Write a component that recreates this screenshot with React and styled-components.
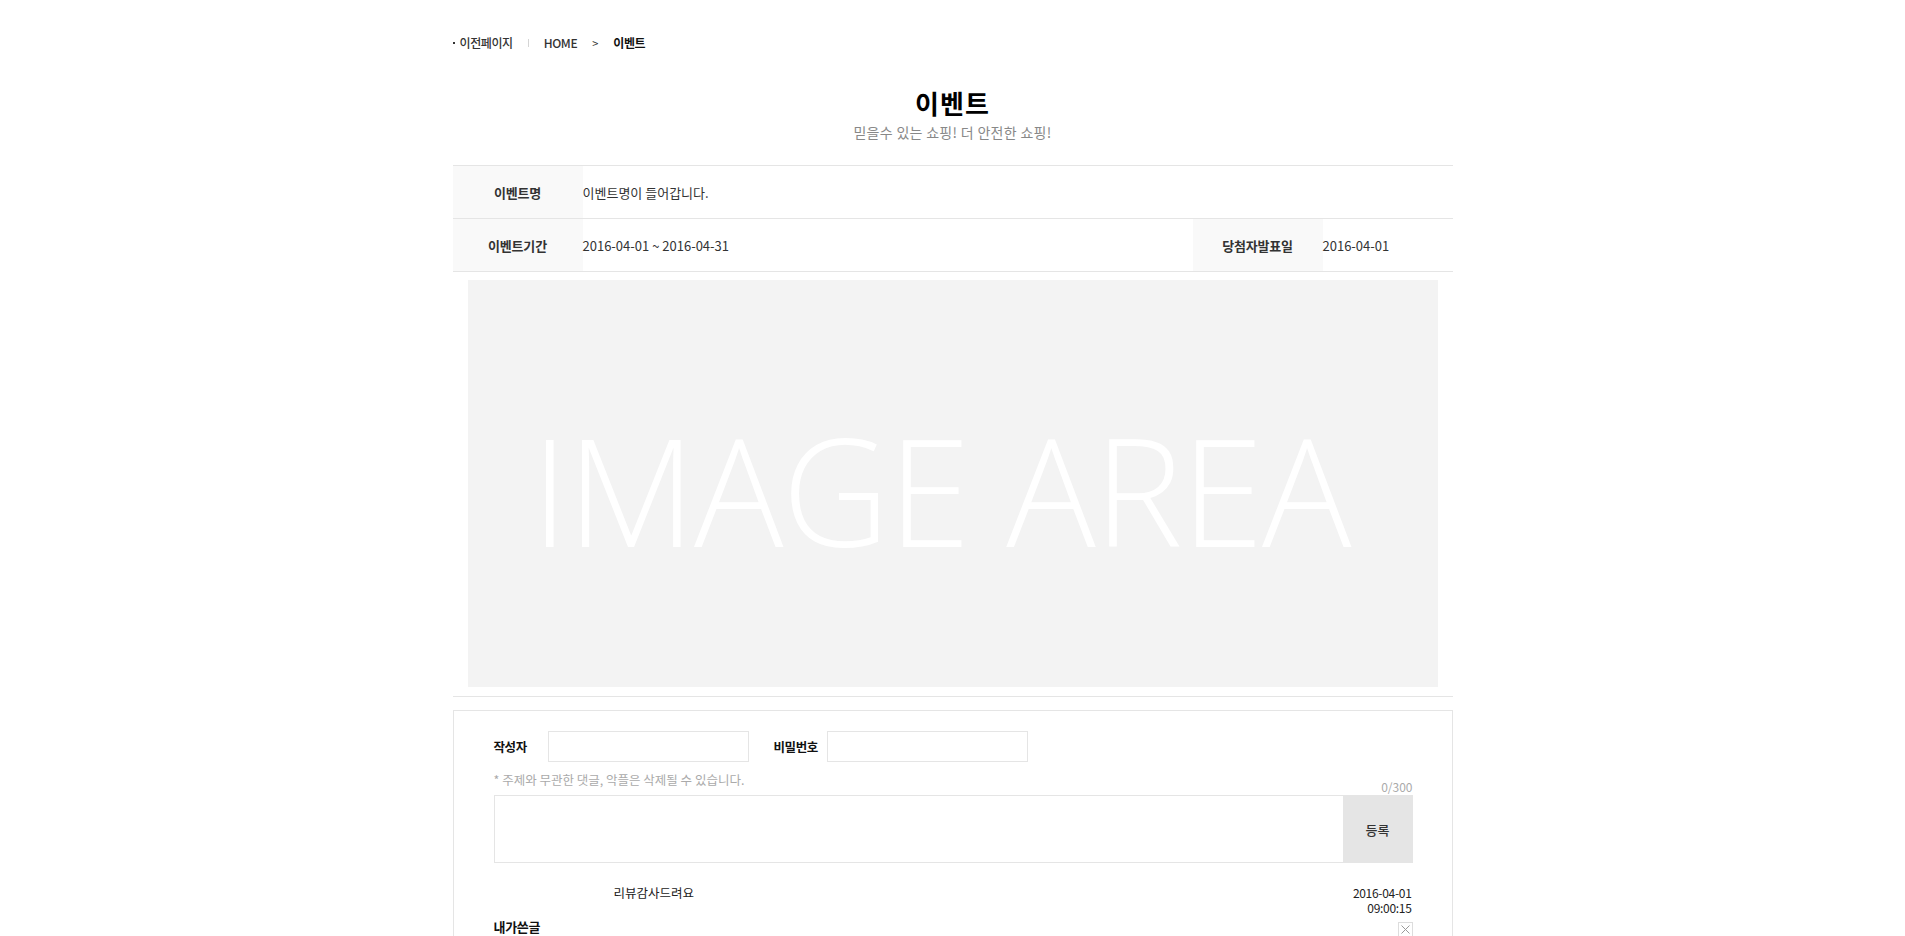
import React from "react";
import styled, { createGlobalStyle } from "styled-components";

const GlobalStyle = createGlobalStyle`
  html, body {
    margin: 0;
    padding: 0;
    overflow: hidden;
    background: #fff;
  }
  body {
    font-family: "Noto Sans CJK KR", "Noto Sans", sans-serif;
    color: #333;
  }
  * { box-sizing: border-box; }
`;

const EventView = () => {
  return (
    <Wrap>
      <Breadcrumb>
        <Crumb>
          <Dot />
          이전페이지
        </Crumb>
        <Bar />
        <Crumb>HOME</Crumb>
        <Arrow>&gt;</Arrow>
        <Crumb $current>이벤트</Crumb>
      </Breadcrumb>

      <TitleBox>
        <Title>이벤트</Title>
        <SubTitle>믿을수 있는 쇼핑! 더 안전한 쇼핑!</SubTitle>
      </TitleBox>

      <InfoTable>
        <InfoRow>
          <Label>이벤트명</Label>
          <Value $span>이벤트명이 들어갑니다.</Value>
        </InfoRow>
        <InfoRow>
          <Label>이벤트기간</Label>
          <Value>2016-04-01 ~ 2016-04-31</Value>
          <Label>당첨자발표일</Label>
          <Value>2016-04-01</Value>
        </InfoRow>
      </InfoTable>

      <ImageWrap>
        <ImageArea>IMAGE AREA</ImageArea>
      </ImageWrap>

      <CommentBox>
        <FormRow>
          <FieldLabel $width="54px">작성자</FieldLabel>
          <Input type="text" />
          <FieldLabel $width="53px" $gap="25px">비밀번호</FieldLabel>
          <Input type="password" />
        </FormRow>
        <NoticeRow>
          <Notice>* 주제와 무관한 댓글, 악플은 삭제될 수 있습니다.</Notice>
          <Counter>0/300</Counter>
        </NoticeRow>
        <Composer>
          <TextArea />
          <SubmitButton>등록</SubmitButton>
        </Composer>

        <CommentItem>
          <Writer />
          <CommentText>리뷰감사드려요</CommentText>
          <CommentDate>
            2016-04-01
            <br />
            09:00:15
          </CommentDate>
        </CommentItem>
        <MineRow>
          <MineTitle>내가쓴글</MineTitle>
          <DeleteButton aria-label="삭제">
            <svg width="9" height="9" viewBox="0 0 9 9">
              <path d="M0.5 0.5 L8.5 8.5 M8.5 0.5 L0.5 8.5" stroke="#999" strokeWidth="1" />
            </svg>
          </DeleteButton>
        </MineRow>
      </CommentBox>
    </Wrap>
  );
};

export default function App() {
  return (
    <>
      <GlobalStyle />
      <EventView />
    </>
  );
}

// Styles
const Wrap = styled.div`
  width: 1000px;
  margin: 0 auto;
  padding-bottom: 40px;
`;

const Breadcrumb = styled.div`
  display: flex;
  align-items: center;
  gap: 15px;
  padding-top: 33px;
  height: 53px;
  font-size: 12px;
  line-height: 20px;
`;

const Crumb = styled.span`
  display: flex;
  align-items: center;
  color: ${(p) => (p.$current ? "#111" : "#333")};
  font-weight: ${(p) => (p.$current ? 700 : 500)};
  letter-spacing: -0.4px;
`;

const Dot = styled.i`
  display: inline-block;
  width: 2px;
  height: 2px;
  background: #333;
  margin-right: 5px;
`;

const Bar = styled.i`
  display: inline-block;
  width: 1px;
  height: 8px;
  background: #d5d5d5;
`;

const Arrow = styled.span`
  color: #333;
  font-size: 11px;
`;

const TitleBox = styled.div`
  text-align: center;
  margin-top: 34px;
`;

const Title = styled.h2`
  margin: 0;
  font-size: 26px;
  line-height: 31px;
  font-weight: 700;
  color: #000;
  letter-spacing: 1px;
`;

const SubTitle = styled.p`
  margin: 4px 0 0;
  font-size: 14px;
  line-height: 20px;
  color: #888;
  letter-spacing: 0.3px;
`;

const InfoTable = styled.div`
  margin-top: 23px;
  border-top: 1px solid #e5e5e5;
`;

const InfoRow = styled.div`
  display: grid;
  grid-template-columns: 130px 610px 130px 130px;
  height: 53px;
  border-bottom: 1px solid #e5e5e5;
`;

const Label = styled.div`
  display: flex;
  align-items: center;
  justify-content: center;
  background: #f9f9f9;
  font-size: 13px;
  font-weight: 700;
  color: #333;
  letter-spacing: -0.2px;
`;

const Value = styled.div`
  display: flex;
  align-items: center;
  grid-column: ${(p) => (p.$span ? "2 / span 3" : "auto")};
  font-size: 13px;
  color: #333;
`;

const ImageWrap = styled.div`
  padding: 8px 15px 9px;
  border-bottom: 1px solid #e5e5e5;
`;

const ImageArea = styled.div`
  height: 407px;
  background: #f3f3f3;
  display: flex;
  align-items: center;
  justify-content: center;
  padding: 12px 24px 0 0;
  color: #fff;
  font-family: "Open Sans", "Noto Sans", sans-serif;
  font-weight: 300;
  font-size: 149px;
  letter-spacing: -1.5px;
  line-height: 1;
`;

const CommentBox = styled.div`
  margin-top: 13px;
  border: 1px solid #e5e5e5;
  padding: 20px 39px 20px 40px;
`;

const FormRow = styled.div`
  display: flex;
  align-items: center;
  height: 31px;
`;

const FieldLabel = styled.label`
  width: ${(p) => p.$width};
  margin-left: ${(p) => p.$gap || "0"};
  font-size: 12.5px;
  font-weight: 700;
  color: #111;
  letter-spacing: -0.4px;
`;

const Input = styled.input`
  width: 201px;
  height: 31px;
  border: 1px solid #e5e5e5;
  outline: none;
  padding: 0 8px;
  font-family: inherit;
`;

const NoticeRow = styled.div`
  display: flex;
  justify-content: space-between;
  align-items: flex-end;
  height: 33px;
`;

const Notice = styled.p`
  align-self: flex-start;
  margin: 9px 0 0;
  font-size: 12.5px;
  line-height: 18px;
  color: #aaa;
`;

const Counter = styled.span`
  font-size: 12px;
  line-height: 16px;
  color: #aaa;
`;

const Composer = styled.div`
  display: flex;
  height: 68px;
  border: 1px solid #e5e5e5;
`;

const TextArea = styled.textarea`
  flex: 1;
  border: none;
  resize: none;
  outline: none;
  padding: 10px;
  font-family: inherit;
`;

const SubmitButton = styled.button`
  width: 70px;
  margin: -1px -1px -1px 0;
  border: none;
  background: #e5e5e5;
  font-family: inherit;
  font-size: 13px;
  font-weight: 500;
  color: #333;
  cursor: pointer;
`;

const CommentItem = styled.div`
  display: flex;
  margin-top: 22px;
  font-size: 12px;
  line-height: 15px;
  color: #222;
`;

const Writer = styled.div`
  width: 120px;
`;

const CommentText = styled.div`
  flex: 1;
  font-size: 12.5px;
`;

const CommentDate = styled.div`
  text-align: right;
  padding-right: 1px;
  letter-spacing: -0.3px;
`;

const MineRow = styled.div`
  display: flex;
  justify-content: space-between;
  align-items: flex-start;
  margin-top: 3px;
`;

const MineTitle = styled.strong`
  font-size: 13px;
  line-height: 18px;
  color: #111;
  letter-spacing: -0.3px;
`;

const DeleteButton = styled.button`
  display: flex;
  align-items: center;
  justify-content: center;
  width: 15px;
  height: 15px;
  margin-top: 4px;
  padding: 0;
  border: 1px solid #ddd;
  background: #fff;
`;
